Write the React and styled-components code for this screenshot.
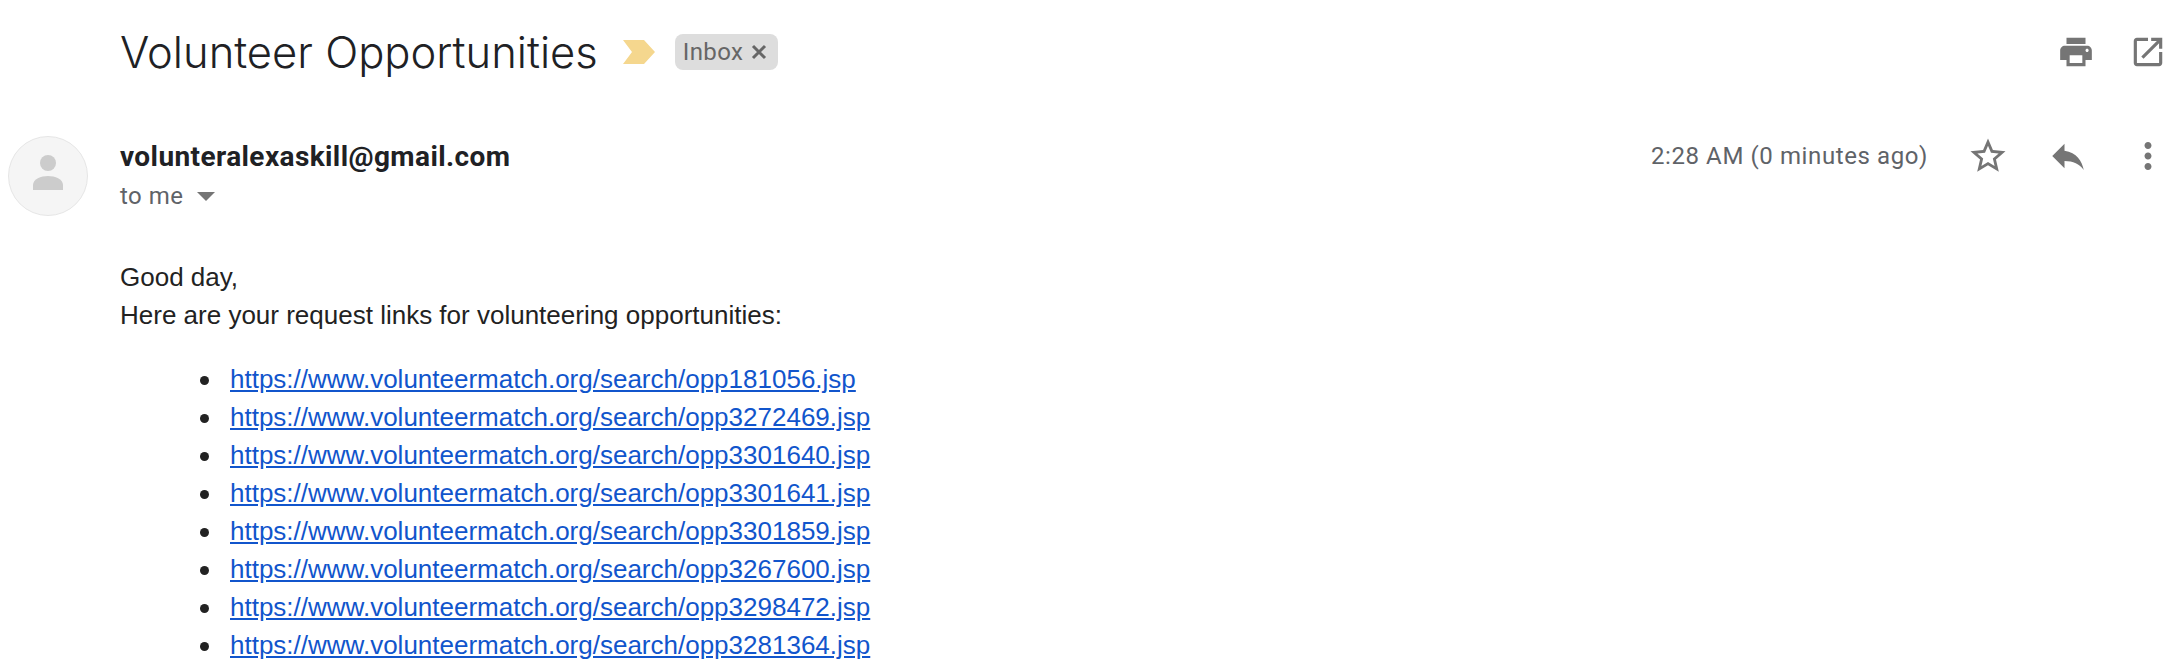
import React from 'react';
import styled, { createGlobalStyle } from 'styled-components';

const GlobalStyle = createGlobalStyle`
  html, body { margin: 0; padding: 0; background: #fff; overflow: hidden; }
`;

const links = [
  'opp181056', 'opp3272469', 'opp3301640', 'opp3301641',
  'opp3301859', 'opp3267600', 'opp3298472', 'opp3281364',
];

const Page = styled.div`
  width: 2176px;
  height: 668px;
  overflow: hidden;
  font-family: Roboto, "Liberation Sans", sans-serif;
`;

const TitleRow = styled.div`
  display: flex;
  align-items: center;
  height: 52px;
  padding: 26px 9px 0 120px;
`;

const Title = styled.h2`
  margin: 0;
  font-family: Inter, Roboto, sans-serif;
  font-weight: 300;
  font-size: 43.5px;
  line-height: 52px;
  color: #202124;
`;

const Marker = styled.svg`
  width: 32px;
  height: 24px;
  margin-left: 25px;
  flex: none;
`;

const Chip = styled.span`
  display: flex;
  align-items: center;
  height: 36px;
  margin-left: 20px;
  padding: 0 9px 0 8px;
  border-radius: 8px;
  background: #dddddd;
  color: #666666;
  font-size: 24px;
  letter-spacing: 0.4px;
`;

const ChipClose = styled.svg`
  width: 20px;
  height: 20px;
  margin-left: 6px;
`;

const ToolIcons = styled.div`
  display: flex;
  gap: 34px;
  margin-left: auto;
`;

const Icon = styled.svg`
  display: block;
  flex: none;
  width: ${(p) => p.$size}px;
  height: ${(p) => p.$size}px;
  fill: #757575;
`;

const SenderRow = styled.div`
  display: flex;
  margin-top: 58px;
  padding: 0 7px 0 8px;
`;

const Avatar = styled.div`
  display: flex;
  align-items: center;
  justify-content: center;
  box-sizing: border-box;
  flex: none;
  width: 80px;
  height: 80px;
  border: 1px solid #e6e6e6;
  border-radius: 50%;
  background: #f5f5f5;
`;

const SenderInfo = styled.div`
  margin-left: 32px;
`;

const SenderName = styled.div`
  font-weight: 700;
  font-size: 28px;
  line-height: 42px;
  letter-spacing: 0.4px;
  color: #202124;
`;

const Recipient = styled.div`
  display: flex;
  align-items: center;
  font-size: 24px;
  line-height: 36px;
  letter-spacing: 0.5px;
  color: #5f6368;
`;

const Caret = styled.span`
  width: 0;
  height: 0;
  margin-left: 13px;
  border-left: 9px solid transparent;
  border-right: 9px solid transparent;
  border-top: 9px solid #757575;
`;

const Meta = styled.div`
  display: flex;
  align-items: center;
  height: 40px;
  margin-left: auto;
`;

const Time = styled.span`
  margin-right: 39px;
  font-size: 24px;
  letter-spacing: 0.6px;
  color: #5f6368;
`;

const MetaIcons = styled.div`
  display: flex;
  gap: 38px;
`;

const Body = styled.div`
  margin-top: 42px;
  padding-left: 120px;
  font-family: "Liberation Sans", Arial, sans-serif;
  font-size: 26px;
  line-height: 38px;
  color: #222222;
`;

const LinkList = styled.ul`
  margin: 26px 0 0;
  padding-left: 110px;
  list-style: none;
`;

const LinkItem = styled.li`
  display: flex;
  align-items: center;
  margin-left: -30px;
  &::before {
    content: "";
    flex: none;
    width: 9px;
    height: 9px;
    margin: 3px 21px 0 0;
    border-radius: 50%;
    background: #222222;
  }
`;

const MailLink = styled.a`
  color: #1155cc;
  text-decoration: underline;
`;

export default function App() {
  return (
    <Page>
      <GlobalStyle />
      <TitleRow>
        <Title>Volunteer Opportunities</Title>
        <Marker viewBox="0 0 32 24">
          <path d="M0 0h21l11 12-11 12H0l9-12z" fill="#f5d78e" />
        </Marker>
        <Chip>
          Inbox
          <ChipClose viewBox="0 0 20 20">
            <path d="M4 4l12 12M16 4L4 16" stroke="#666" strokeWidth="3" fill="none" />
          </ChipClose>
        </Chip>
        <ToolIcons>
          <Icon $size={38} viewBox="0 0 24 24">
            <path d="M19 8H5c-1.66 0-3 1.34-3 3v6h4v4h12v-4h4v-6c0-1.66-1.34-3-3-3zm-3 11H8v-5h8v5zm3-7c-.55 0-1-.45-1-1s.45-1 1-1 1 .45 1 1-.45 1-1 1zm-1-9H6v4h12V3z" />
          </Icon>
          <Icon $size={38} viewBox="0 0 24 24">
            <path d="M19 19H5V5h7V3H5c-1.11 0-2 .9-2 2v14c0 1.1.89 2 2 2h14c1.1 0 2-.9 2-2v-7h-2v7zM14 3v2h3.59l-9.83 9.83 1.41 1.41L19 6.41V10h2V3h-7z" />
          </Icon>
        </ToolIcons>
      </TitleRow>

      <SenderRow>
        <Avatar>
          <svg width="32" height="44" viewBox="0 0 32 44">
            <circle cx="16" cy="9" r="8" fill="#cccccc" />
            <path d="M1 36v-5c0-6 8-9 15-9s15 3 15 9v5z" fill="#cccccc" />
          </svg>
        </Avatar>
        <SenderInfo>
          <SenderName>volunteralexaskill@gmail.com</SenderName>
          <Recipient>
            to me
            <Caret />
          </Recipient>
        </SenderInfo>
        <Meta>
          <Time>2:28 AM (0 minutes ago)</Time>
          <MetaIcons>
            <Icon $size={42} viewBox="0 0 24 24">
              <path d="M22 9.24l-7.19-.62L12 2 9.19 8.63 2 9.24l5.46 4.73L5.82 21 12 17.27 18.18 21l-1.63-7.03L22 9.24zM12 15.4l-3.76 2.27 1-4.28-3.32-2.88 4.38-.38L12 6.1l1.71 4.04 4.38.38-3.32 2.88 1 4.28L12 15.4z" />
            </Icon>
            <Icon $size={42} viewBox="0 0 24 24">
              <path d="M10 9V5l-7 7 7 7v-4.1c5 0 8.5 1.6 11 5.1-1-5-4-10-11-11z" />
            </Icon>
            <Icon $size={42} viewBox="0 0 24 24">
              <path d="M12 8c1.1 0 2-.9 2-2s-.9-2-2-2-2 .9-2 2 .9 2 2 2zm0 2c-1.1 0-2 .9-2 2s.9 2 2 2 2-.9 2-2-.9-2-2-2zm0 6c-1.1 0-2 .9-2 2s.9 2 2 2 2-.9 2-2-.9-2-2-2z" />
            </Icon>
          </MetaIcons>
        </Meta>
      </SenderRow>

      <Body>
        <div>Good day,</div>
        <div>Here are your request links for volunteering opportunities:</div>
        <LinkList>
          {links.map((id) => (
            <LinkItem key={id}>
              <MailLink href="#">{`https://www.volunteermatch.org/search/${id}.jsp`}</MailLink>
            </LinkItem>
          ))}
        </LinkList>
      </Body>
    </Page>
  );
}
